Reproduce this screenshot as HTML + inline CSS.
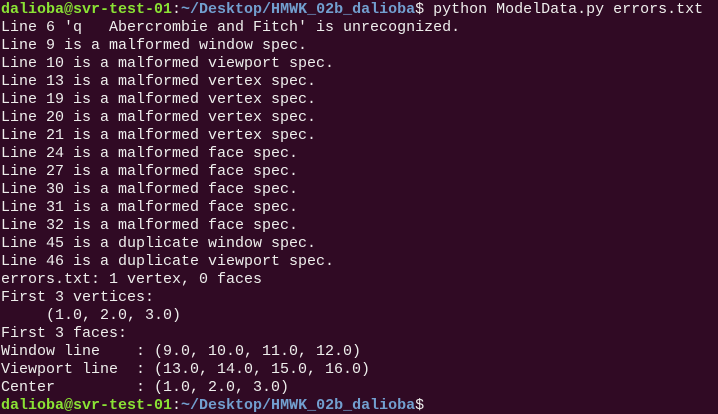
<!DOCTYPE html>
<html><head><meta charset="utf-8"><style>
html,body{margin:0;padding:0;background:#300a24;width:718px;height:414px;overflow:hidden}
pre{margin:0;padding:0 0 0 1px;font-family:"Liberation Mono",monospace;font-size:15px;line-height:18px;color:#eeeeec;position:relative;top:1px}
.g{color:#8ae234;font-weight:bold}.b{color:#729fcf;font-weight:bold}
</style></head><body><pre><span class="g">dalioba@svr-test-01</span>:<span class="b">~/Desktop/HMWK_02b_dalioba</span>$ python ModelData.py errors.txt
Line 6 'q   Abercrombie and Fitch' is unrecognized.
Line 9 is a malformed window spec.
Line 10 is a malformed viewport spec.
Line 13 is a malformed vertex spec.
Line 19 is a malformed vertex spec.
Line 20 is a malformed vertex spec.
Line 21 is a malformed vertex spec.
Line 24 is a malformed face spec.
Line 27 is a malformed face spec.
Line 30 is a malformed face spec.
Line 31 is a malformed face spec.
Line 32 is a malformed face spec.
Line 45 is a duplicate window spec.
Line 46 is a duplicate viewport spec.
errors.txt: 1 vertex, 0 faces
First 3 vertices:
     (1.0, 2.0, 3.0)
First 3 faces:
Window line    : (9.0, 10.0, 11.0, 12.0)
Viewport line  : (13.0, 14.0, 15.0, 16.0)
Center         : (1.0, 2.0, 3.0)
<span class="g">dalioba@svr-test-01</span>:<span class="b">~/Desktop/HMWK_02b_dalioba</span>$</pre></body></html>
